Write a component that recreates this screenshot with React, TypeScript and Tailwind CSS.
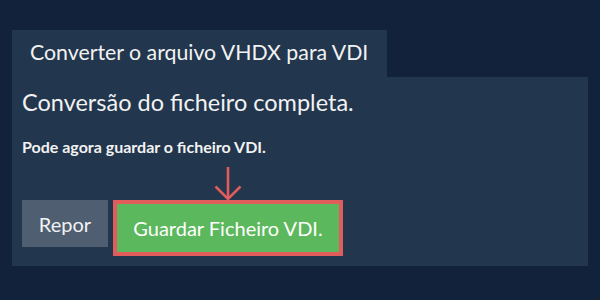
import React from 'react'

function DownArrow() {
  return (
    <svg width="28" height="36" viewBox="0 0 28 36" className="absolute left-1/2 -translate-x-1/2 -top-[38px]">
      <path d="M14 1 V33" stroke="#e05d5b" strokeWidth="2.6" fill="none" />
      <path d="M1.5 20.5 L14 33 L26.5 20.5" stroke="#e05d5b" strokeWidth="2.6" fill="none" />
    </svg>
  )
}

export default function App() {
  return (
    <div
      className="w-[600px] h-[300px] bg-[#11223a] pt-[30px] px-3 text-[#f2f2f2]"
      style={{ fontFamily: 'Lato, "Open Sans", sans-serif' }}
    >
      {/* Tab */}
      <div className="w-[375px] h-[47px] bg-[#22364d] pl-[18px] pt-[8px] text-[21.3px] leading-[28px]">
        Converter o arquivo VHDX para VDI
      </div>

      {/* Panel */}
      <div className="w-[576px] h-[189px] bg-[#22364d] px-[10px] pt-[10px]">
        <h1 className="text-[23.5px] leading-[30px]">Conversão do ficheiro completa.</h1>
        <p className="mt-[20px] text-[16px] font-bold leading-[20px]">Pode agora guardar o ficheiro VDI.</p>

        <div className="mt-[43px] flex items-start gap-[5px]">
          <button className="w-[86px] h-[47px] bg-[#4f5e70] text-[20px] text-[#f2f2f2]">Repor</button>
          <div className="relative border-4 border-[#e05d5b]">
            <DownArrow />
            <button className="w-[222px] h-[48px] bg-[#5cb85c] text-[20px] text-white">Guardar Ficheiro VDI.</button>
          </div>
        </div>
      </div>
    </div>
  )
}
